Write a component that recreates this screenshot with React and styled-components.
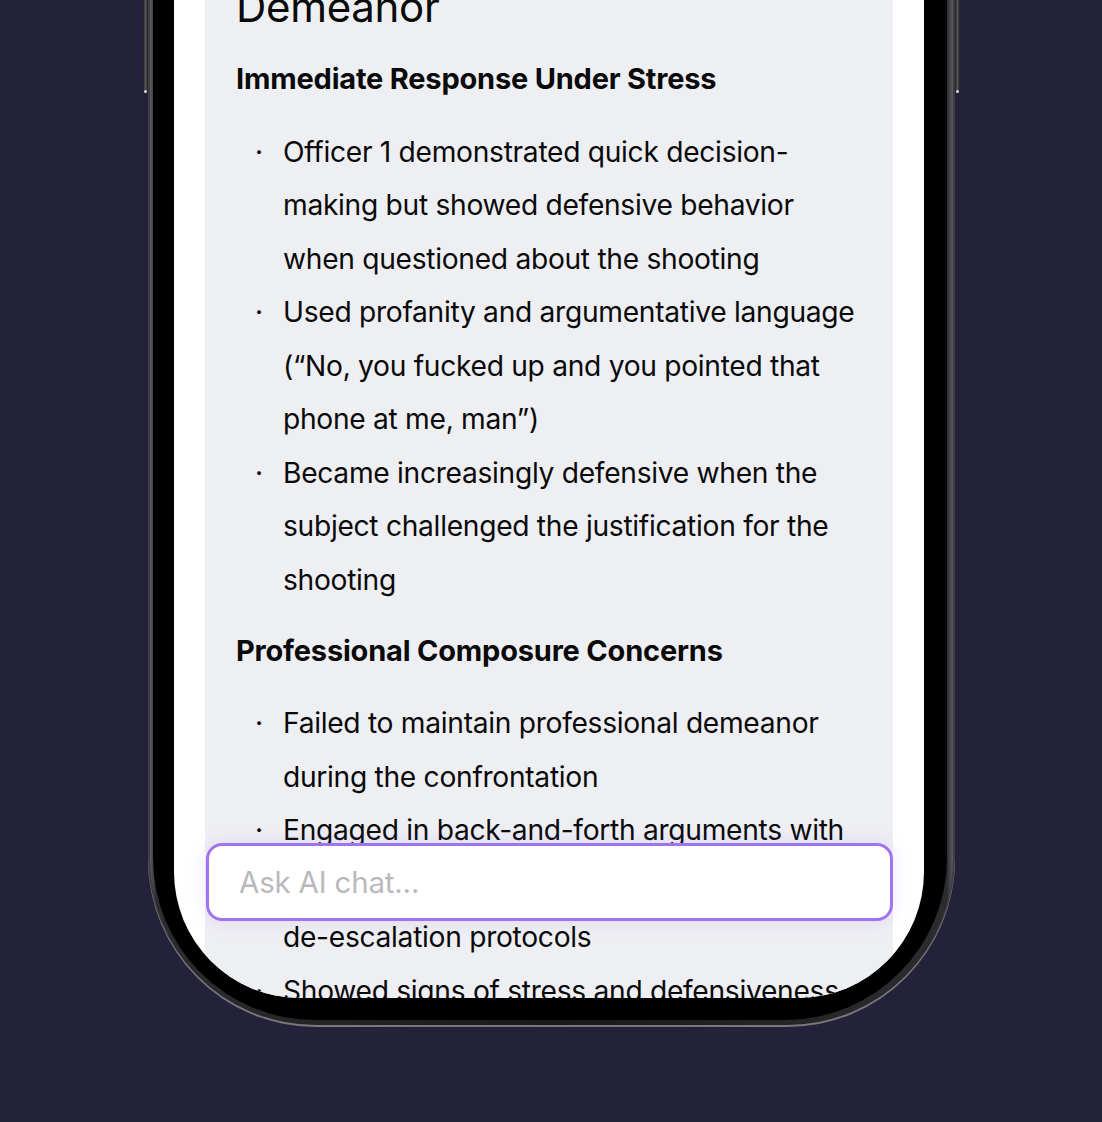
import styled, { createGlobalStyle } from "styled-components";

const GlobalStyle = createGlobalStyle`
  * { box-sizing: border-box; }
  body {
    margin: 0;
    background: #24223a;
    font-family: Inter, "Noto Sans", "Liberation Sans", sans-serif;
  }
`;

const Stage = styled.div`
  height: 1122px;
  overflow: hidden;
  display: flex;
  padding-left: 148px;
  background: #24223a;
`;

const Phone = styled.div`
  position: relative;
  width: 807px;
  height: 1127px;
  margin-top: -100px;
  padding: 5px 8px 7px 5px;
  border-radius: 0 0 168px 168px;
  background: linear-gradient(90deg, #6b6b70 0%, #2c2c30 1%, #1a1a1c 50%, #2c2c30 99%, #6b6b70 100%);
  box-shadow: inset 0 -2px 0 #77777c, inset 2px 0 0 #3e3e42, inset -2px 0 0 #3e3e42;
`;

const SideButton = styled.div`
  position: absolute;
  top: 0;
  ${(p) => (p.$right ? "right: -5px;" : "left: -5px;")}
  width: 5px;
  height: 193px;
  border-radius: 0 0 3px 3px;
  background: linear-gradient(90deg, #1c1c20, #55555a, #1c1c20);
  &::after {
    content: "";
    position: absolute;
    bottom: 0;
    left: 1px;
    width: 3px;
    height: 3px;
    border-radius: 50%;
    background: #d8d8dc;
  }
`;

const Bezel = styled.div`
  height: 100%;
  padding: 21px 23px 22px 21px;
  background: #000;
  border-radius: 0 0 162px 162px;
`;

const Screen = styled.div`
  position: relative;
  height: 100%;
  background: #fff;
  border-radius: 0 0 126px 126px;
  overflow: hidden;
  padding: 0 31px;
`;

const Panel = styled.div`
  height: 100%;
  background: #eeeff3;
  padding: 57px 27px 0 31px;
  color: #0a0a0a;
`;

const Title = styled.h2`
  margin: 0 0 28px;
  font-size: 42px;
  font-weight: 400;
  line-height: 48px;
  letter-spacing: -0.3px;
`;

const Heading = styled.h3`
  margin: 0;
  font-size: 29px;
  font-weight: 700;
  line-height: 40px;
  letter-spacing: -0.2px;
`;

const List = styled.ul`
  list-style: none;
  margin: 0;
  padding: 26.5px 0 23.5px;
`;

const Item = styled.li`
  display: flex;
  font-size: 28.2px;
  line-height: 53.5px;
  letter-spacing: -0.3px;
`;

const Dot = styled.span`
  flex: none;
  width: 47px;
  padding-left: 19px;
`;

const NoWrap = styled.span`
  white-space: nowrap;
`;

const ChatBox = styled.div`
  position: absolute;
  left: 32px;
  right: 31px;
  bottom: 77px;
  height: 78px;
  display: flex;
  align-items: center;
  padding: 0 30px;
  background: #fff;
  border: 3px solid #9f74f1;
  border-radius: 16px;
  box-shadow: 0 0 18px rgba(159, 116, 241, 0.18);
`;

const ChatInput = styled.input`
  all: unset;
  flex: 1;
  font-family: inherit;
  font-size: 29.5px;
  letter-spacing: -0.2px;
  color: #0a0a0a;
  &::placeholder {
    color: #b9b9bd;
  }
`;

const sections = [
  {
    heading: "Immediate Response Under Stress",
    items: [
      "Officer 1 demonstrated quick decision-making but showed defensive behavior when questioned about the shooting",
      "Used profanity and argumentative language (\u201cNo, you fucked up and you pointed that phone at me, man\u201d)",
      "Became increasingly defensive when the subject challenged the justification for the shooting",
    ],
  },
  {
    heading: "Professional Composure Concerns",
    items: [
      "Failed to maintain professional demeanor during the confrontation",
      <>
        Engaged in back-and-forth arguments with the subject instead of following proper{" "}
        <NoWrap>de-escalation</NoWrap> protocols
      </>,
      "Showed signs of stress and defensiveness throughout the encounter with the subject",
    ],
  },
];

export default function App() {
  return (
    <Stage>
      <GlobalStyle />
      <Phone>
        <SideButton />
        <SideButton $right />
        <Bezel>
          <Screen>
            <Panel>
              <Title>Demeanor</Title>
              {sections.map((s) => (
                <div key={s.heading}>
                  <Heading>{s.heading}</Heading>
                  <List>
                    {s.items.map((t, i) => (
                      <Item key={i}>
                        <Dot>·</Dot>
                        <span>{t}</span>
                      </Item>
                    ))}
                  </List>
                </div>
              ))}
            </Panel>
            <ChatBox>
              <ChatInput placeholder="Ask AI chat..." />
            </ChatBox>
          </Screen>
        </Bezel>
      </Phone>
    </Stage>
  );
}
